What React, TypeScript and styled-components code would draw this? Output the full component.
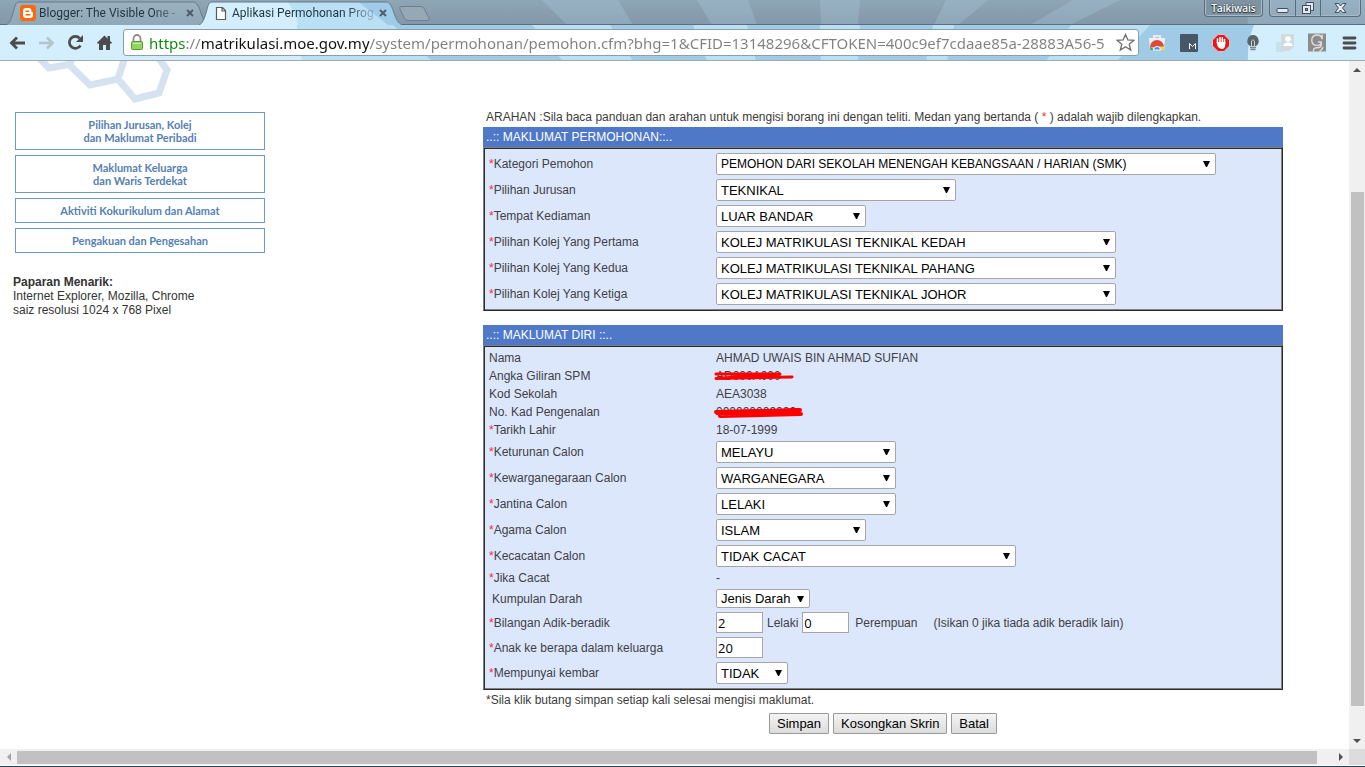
import React from 'react';
import styled, { createGlobalStyle, css } from 'styled-components';

const arial = "'Liberation Sans', Arial, sans-serif";
const chromeFont = "'Open Sans', 'Noto Sans', sans-serif";

const GlobalStyle = createGlobalStyle`
  *, *::before, *::after { box-sizing: border-box; }
  body { margin: 0; background: #fff; font-family: ${arial}; font-size: 12px; color: #333; }
  button, input, select { font-family: inherit; margin: 0; }
`;

/* ---------- browser frame ---------- */

const Window = styled.div`
  min-height: 100vh;
  display: flex;
  flex-direction: column;
  border-bottom: 1px solid #24415e;
`;

const TabStrip = styled.div`
  position: relative;
  height: 25px;
  display: flex;
  align-items: flex-end;
  padding-left: 6px;
  overflow: hidden;
  background: linear-gradient(#8fa6b7, #8297a8);
`;

const Backdrop = styled.svg`
  position: absolute;
  left: 0;
  top: 0;
`;

const StripEdge = styled.div`
  position: absolute;
  left: 0;
  right: 0;
  bottom: 0;
  height: 1px;
  background: #5b6f7e;
`;

const Tab = styled.div<{ $active?: boolean }>`
  position: relative;
  z-index: ${p => (p.$active ? 2 : 1)};
  width: 203px;
  height: 24px;
  display: flex;
  align-items: center;
  gap: 3px;
  padding: 0 13px 0 14px;
  & + & { margin-left: -10px; }
`;

const TabShape = styled.svg`
  position: absolute;
  left: 0;
  top: 0;
`;

const TabIcon = styled.svg`
  position: relative;
  flex: none;
`;

const TabTitle = styled.a`
  position: relative;
  flex: 1;
  min-width: 0;
  white-space: nowrap;
  font: 12px/20px Roboto, ${chromeFont};
  color: #1f3542;
  text-decoration: none;
  mask-image: linear-gradient(to right, #000 80%, rgba(0, 0, 0, 0.2));
`;

const PlainButton = styled.button`
  position: relative;
  flex: none;
  display: flex;
  align-items: center;
  justify-content: center;
  padding: 0;
  border: 0;
  background: none;
`;

const TabClose = styled(PlainButton)`
  width: 12px;
  height: 12px;
`;

const NewTab = styled(PlainButton)`
  z-index: 1;
  width: 34px;
  height: 17px;
  margin: 0 0 3px -5px;
`;

const WindowControls = styled.div`
  position: relative;
  align-self: flex-start;
  margin: 0 4px 0 auto;
  display: flex;
  gap: 6px;
`;

const frame = css`
  border: 1px solid #5a6d7b;
  border-top: 0;
  border-radius: 0 0 4px 4px;
  box-shadow: inset 1px 0 #a9bac6, inset -1px -1px #a9bac6;
`;

const ProfileButton = styled.button`
  height: 17px;
  width: 59px;
  padding: 0;
  ${frame}
  background: #7f93a2;
  font: 600 10px/16px ${chromeFont};
  color: #fff;
  text-shadow: 0 0 2px #1d2a33, 0 1px 1px #1d2a33;
`;

const ControlGroup = styled.div`
  display: flex;
  height: 17px;
  ${frame}
`;

const ControlButton = styled(PlainButton)<{ $wide?: boolean }>`
  width: ${p => (p.$wide ? 40 : 25)}px;
  height: 16px;
  & + & { border-left: 1px solid #5a6d7b; }
`;

const Toolbar = styled.div`
  position: relative;
  height: 36px;
  display: flex;
  align-items: center;
  padding: 0 7px 0 9px;
  overflow: hidden;
  background: #9fcbe7;
  border-bottom: 1px solid #a5a8aa;
`;

const NavButtons = styled.div`
  position: relative;
  display: flex;
  gap: 12px;
  margin-right: 10px;
`;

const Extensions = styled(NavButtons)`
  gap: 14px;
  margin: 0 0 0 9px;
`;

const IconButton = styled(PlainButton)`
  width: 17px;
  height: 20px;
`;

const ExtensionButton = styled(IconButton)`
  width: 18px;
`;

const AddressBar = styled.div`
  position: relative;
  flex: 1;
  min-width: 0;
  height: 27px;
  display: flex;
  align-items: center;
  padding: 0 3px 0 6px;
  background: #fff;
  border: 1px solid #8b9fab;
  border-radius: 3px;
`;

/* The protocol and host take their own colours inside one text field. */
const AddressInput = styled.input`
  flex: 1;
  min-width: 0;
  height: 24px;
  margin-left: 5px;
  padding: 0;
  border: 0;
  outline: 0;
  font: 15px/24px 'Noto Sans', 'Open Sans', sans-serif;
  color: #808080;
  background: linear-gradient(to right, #0a8a0a 37px, #808080 37px 52px, #111 52px 220px, #808080 220px);
  background-clip: text;
  -webkit-background-clip: text;
  -webkit-text-fill-color: transparent;
`;

/* ---------- scrolling viewport ---------- */

const Viewport = styled.div`
  flex: 1;
  display: grid;
  grid-template-columns: minmax(0, 1fr) 16px;
  grid-template-rows: 1fr 16px;
  padding-bottom: 1px;
  background: #fff;
`;

const VerticalBar = styled.div`
  display: flex;
  flex-direction: column;
  background: #f0f0f0;
`;

const HorizontalBar = styled.div`
  display: flex;
  background: #f0f0f0;
`;

const ScrollArrow = styled(PlainButton)`
  width: 17px;
  height: 17px;
  ${VerticalBar} & { width: 16px; }
  ${HorizontalBar} & { height: 16px; }
`;

const Thumb = styled.div<{ $share: number }>`
  flex: ${p => p.$share} 0 0;
  background: #c1c1c1;
  ${VerticalBar} & { margin: 0 1px 0 2px; }
  ${HorizontalBar} & { margin: 2px 0 1px; }
`;

const Track = styled.div<{ $share: number }>`
  flex: ${p => p.$share} 0 0;
`;

const Corner = styled.div`
  background: #dcdcdc;
`;

/* ---------- page ---------- */

const Page = styled.div`
  display: flex;
  padding-right: 66px;
`;

const Sidebar = styled.aside`
  flex: none;
  width: 483px;
  padding-left: 13px;
`;

const Logo = styled.svg`
  display: block;
  margin: 0 0 9px 23px;
`;

const Menu = styled.nav`
  width: 252px;
  padding-left: 2px;
  display: flex;
  flex-direction: column;
  gap: 5px;
`;

const MenuLink = styled.a`
  padding: 5px 0;
  border: 1px solid #6c9bcb;
  font: 700 11px/13px Lato, 'Century Gothic', sans-serif;
  text-align: center;
  color: #5580b4;
  text-decoration: none;
`;

const Notice = styled.p`
  margin: 22px 0 0;
  line-height: 14px;
`;

const Form = styled.form`
  flex: 1;
  max-width: 800px;
  min-width: 0;
  padding: 46px 0 14px;
`;

const Hint = styled.p`
  margin: 0;
  padding-left: 3px;
  line-height: 20px;
  white-space: nowrap;
  color: #3b3b3b;
`;

const Mark = styled.span<{ $strong?: boolean }>`
  color: ${p => (p.$strong ? '#e0421c' : '#f0284a')};
`;

const Section = styled.section`
  & + & { margin-top: 14px; }
`;

const SectionTitle = styled.h2`
  margin: 0;
  padding-left: 3px;
  background: #4f79c8;
  color: #fff;
  font: 12px/20px ${arial};
`;

const Panel = styled.div`
  padding: 3px;
  border: 1px solid;
  border-color: #808080 #2c2c2c #2c2c2c #808080;
  box-shadow: inset 1px 1px #2c2c2c, inset -1px -1px #808080;
  background: #dce7fb;
`;

const Row = styled.div<{ $height: number }>`
  display: grid;
  grid-template-columns: 227px minmax(0, 1fr);
  align-items: center;
  height: ${p => p.$height}px;
  padding-left: 2px;
  color: #3f4048;
`;

const Label = styled.label<{ $indent?: boolean }>`
  padding-left: ${p => (p.$indent ? 3 : 0)}px;
`;

const Cell = styled.div`
  display: flex;
  align-items: center;
`;

const SelectFrame = styled.span<{ $width: number }>`
  position: relative;
  width: ${p => p.$width}px;
`;

const SelectBox = styled.select<{ $small?: boolean; $short?: boolean }>`
  appearance: none;
  display: block;
  width: 100%;
  height: ${p => (p.$short ? 19 : 22)}px;
  padding: 0 0 0 4px;
  border: 1px solid #a6a6a6;
  border-radius: 2px;
  background: #fff;
  color: #000;
  font-size: ${p => (p.$small ? 12 : 13)}px;
`;

const SelectArrow = styled.svg`
  position: absolute;
  right: 6px;
  top: calc(50% - 3px);
  pointer-events: none;
`;

const NumberBox = styled.input`
  width: 47px;
  height: 21px;
  padding: 0 1px;
  border: 1px solid #a6a6a6;
  background: #fff;
  color: #000;
  font: 13px ${chromeFont};
`;

const Unit = styled.label<{ $gap?: boolean }>`
  margin: 0 ${p => (p.$gap ? 16 : 4)}px 0 ${p => (p.$gap ? 6 : 4)}px;
`;

const Redacted = styled.span`
  position: relative;
`;

const Scribble = styled.svg`
  position: absolute;
  left: -2px;
  top: 0;
`;

const Actions = styled.div`
  display: flex;
  justify-content: center;
  gap: 4px;
  margin-top: 3px;
`;

const ActionButton = styled.button`
  height: 21px;
  padding: 0 7px;
  border: 1px solid #9a9a9a;
  border-radius: 1px;
  background: linear-gradient(#f4f4f4, #dcdcdc);
  color: #000;
  font-size: 13px;
`;

/* ---------- drawings ---------- */

const TabBackground = ({ active }: { active?: boolean }) => (
  <TabShape width="203" height="24" viewBox="0 0 203 24" aria-hidden="true">
    <defs>
      <linearGradient id="idleTab" x1="0" y1="0" x2="0" y2="1">
        <stop offset="0" stopColor="#9cb2c1" />
        <stop offset="1" stopColor="#8fa7b7" />
      </linearGradient>
      <clipPath id="tabClip">
        <path d="M0 24C4 22 5 18 7 12S9 1 13 1H187C191 1 193 6 195 12S199 22 203 24Z" />
      </clipPath>
    </defs>
    {active ? (
      <g clipPath="url(#tabClip)">
        <path d="M0 0H203V24H0Z" fill="#d3eefc" />
        <path d="M88 0H203V24H99Q97 12 88 0Z" fill="#bae0f5" />
        <path d="M158 0H203V24H189Z" fill="#9fcbe7" />
      </g>
    ) : (
      <path d="M0 24C4 22 5 18 7 12S9 1 13 1H187C191 1 193 6 195 12S199 22 203 24Z" fill="url(#idleTab)" />
    )}
    <path
      d="M0 24C4 22 5 18 7 12S9 1 13 1H187C191 1 193 6 195 12S199 22 203 24"
      fill="none"
      stroke={active ? '#64798a' : '#667a89'}
    />
  </TabShape>
);

const Cross = () => (
  <svg width="8" height="8" viewBox="0 0 8 8" aria-hidden="true">
    <path d="M1 1L7 7M7 1L1 7" stroke="#4a5b67" strokeWidth="1.8" />
  </svg>
);

const Arrow = ({ points, tone = '#505050' }: { points: string; tone?: string }) => (
  <svg width="8" height="8" viewBox="0 0 8 8" aria-hidden="true">
    <polygon points={points} fill={tone} />
  </svg>
);

/* ---------- form parts ---------- */

type SelectProps = { id: string; width: number; value: string; small?: boolean; short?: boolean };

const Select = ({ id, width, value, small, short }: SelectProps) => (
  <SelectFrame $width={width}>
    <SelectBox id={id} $small={small} $short={short} defaultValue={value}>
      <option>{value}</option>
    </SelectBox>
    <SelectArrow width="7" height="6" viewBox="0 0 7 6" aria-hidden="true">
      <path d="M0 0H7L4 6H3Z" fill="#000" />
    </SelectArrow>
  </SelectFrame>
);

type FieldProps = {
  label: string;
  height?: number;
  required?: boolean;
  indent?: boolean;
  htmlFor?: string;
  children: React.ReactNode;
};

const Field = ({ label, height = 26, required, indent, htmlFor, children }: FieldProps) => (
  <Row $height={height}>
    <Label as={htmlFor ? 'label' : 'span'} htmlFor={htmlFor} $indent={indent}>
      {required && <Mark>*</Mark>}
      {label}
    </Label>
    <Cell>{children}</Cell>
  </Row>
);

const applicationFields: (SelectProps & { label: string })[] = [
  { id: 'kategori', label: 'Kategori Pemohon', width: 500, small: true, value: 'PEMOHON DARI SEKOLAH MENENGAH KEBANGSAAN / HARIAN (SMK)' },
  { id: 'jurusan', label: 'Pilihan Jurusan', width: 240, value: 'TEKNIKAL' },
  { id: 'kediaman', label: 'Tempat Kediaman', width: 150, value: 'LUAR BANDAR' },
  { id: 'kolej1', label: 'Pilihan Kolej Yang Pertama', width: 400, value: 'KOLEJ MATRIKULASI TEKNIKAL KEDAH' },
  { id: 'kolej2', label: 'Pilihan Kolej Yang Kedua', width: 400, value: 'KOLEJ MATRIKULASI TEKNIKAL PAHANG' },
  { id: 'kolej3', label: 'Pilihan Kolej Yang Ketiga', width: 400, value: 'KOLEJ MATRIKULASI TEKNIKAL JOHOR' },
];

const personalFields: (SelectProps & { label: string })[] = [
  { id: 'keturunan', label: 'Keturunan Calon', width: 180, value: 'MELAYU' },
  { id: 'warganegara', label: 'Kewarganegaraan Calon', width: 180, value: 'WARGANEGARA' },
  { id: 'jantina', label: 'Jantina Calon', width: 180, value: 'LELAKI' },
  { id: 'agama', label: 'Agama Calon', width: 150, value: 'ISLAM' },
  { id: 'kecacatan', label: 'Kecacatan Calon', width: 300, value: 'TIDAK CACAT' },
];

const SelectField = ({ label, ...select }: SelectProps & { label: string }) => (
  <Field label={label} required htmlFor={select.id}>
    <Select {...select} />
  </Field>
);

export default function App() {
  return (
    <Window>
      <GlobalStyle />
      <TabStrip>
        <Backdrop width="1365" height="25" aria-hidden="true">
          <g fill="#a9c8dc" opacity="0.32">
            <path d="M542 0H618L633 25H567Z" />
            <path d="M697 0H748L757 25H712Z" />
            <path d="M820 0H860L858 25H821Z" />
            <path d="M946 0H988L958 25H934Z" />
            <path d="M1073 0H1120L1070 25H1030Z" />
            <path d="M1246 0H1365V25H1248Z" />
          </g>
        </Backdrop>
        <StripEdge />
        <Tab>
          <TabBackground />
          <TabIcon width="16" height="16" viewBox="0 0 16 16" aria-hidden="true">
            <rect width="16" height="16" rx="3" fill="#fb6a0a" />
            <path d="M6 3H8.500A3 3 0 0 1 11.500 6Q11.500 7 12.300 7Q13 7 13 8V10A3 3 0 0 1 10 13H6A3 3 0 0 1 3 10V6A3 3 0 0 1 6 3Z" fill="#fff" />
            <path d="M6 6.200H8.500M6 9.800H10" stroke="#fb6a0a" strokeWidth="1.400" strokeLinecap="round" />
          </TabIcon>
          <TabTitle href="#blogger">Blogger: The Visible One -</TabTitle>
          <TabClose aria-label="Tutup tab"><Cross /></TabClose>
        </Tab>
        <Tab $active>
          <TabBackground active />
          <TabIcon width="16" height="16" viewBox="0 0 16 16" aria-hidden="true">
            <path d="M3.500 2.500H9.500L12.500 5.500V14.500H3.500ZM9 2.500V6H12.500" fill="#fff" stroke="#5c5c5c" strokeWidth="1.200" />
          </TabIcon>
          <TabTitle href="#permohonan">Aplikasi Permohonan Prog</TabTitle>
          <TabClose aria-label="Tutup tab"><Cross /></TabClose>
        </Tab>
        <NewTab aria-label="Tab baharu">
          <svg width="34" height="17" viewBox="0 0 34 17" aria-hidden="true">
            <path d="M4 1.500H24Q26 1.500 27 3.500L32 13Q33 15.500 31 15.500H11Q8.500 15.500 7.500 13.500L3 4Q2 1.500 4 1.500Z" fill="#94a8b6" stroke="#6d808e" />
          </svg>
        </NewTab>
        <WindowControls>
          <ProfileButton>Taikiwais</ProfileButton>
          <ControlGroup>
            <ControlButton aria-label="Kecilkan">
              <svg width="13" height="16" viewBox="0 0 13 16" aria-hidden="true">
                <rect x="1" y="8.500" width="11" height="4" rx="1" fill="#e4eaee" stroke="#3f4f5b" />
              </svg>
            </ControlButton>
            <ControlButton aria-label="Pulihkan">
              <svg width="14" height="16" viewBox="0 0 14 16" aria-hidden="true">
                <path d="M5 2.500H12.500V10.500H9.500V5.500H5Z" fill="#e4eaee" stroke="#3f4f5b" />
                <rect x="1.500" y="5.500" width="8" height="8" fill="#e4eaee" stroke="#3f4f5b" />
                <rect x="4.500" y="8.500" width="2" height="2" fill="#8598a6" stroke="#3f4f5b" />
              </svg>
            </ControlButton>
            <ControlButton $wide aria-label="Tutup">
              <svg width="13" height="16" viewBox="0 0 13 16" aria-hidden="true">
                <path d="M1 3.500H4.500L6.500 6L8.500 3.500H12L8.600 8L12 12.500H8.500L6.500 10L4.500 12.500H1L4.400 8Z" fill="#e4eaee" stroke="#3f4f5b" />
              </svg>
            </ControlButton>
          </ControlGroup>
        </WindowControls>
      </TabStrip>

      <Toolbar>
        <Backdrop width="1365" height="36" aria-hidden="true">
          <path d="M298 0H393L432 36H302Z" fill="#b9e0f5" />
          <path d="M0 0H297Q301 16 302 36H0Z" fill="#d3eefc" />
          <g fill="#b9e0f5">
            <path d="M532 0H610L633 36H563Z" />
            <path d="M693 0H747L756 36H707Z" />
            <path d="M820 0H860L858 36H821Z" />
            <path d="M933 0H954L947 36H926Z" />
            <path d="M1071 0H1150L1117 36H1046Z" />
          </g>
          <path d="M1254 0H1365V36H1248Q1247 16 1254 0Z" fill="#d3eefc" />
        </Backdrop>
        <NavButtons>
          <IconButton aria-label="Kembali">
            <svg width="17" height="16" viewBox="0 0 17 16" aria-hidden="true">
              <path d="M16 8H3M8 2.500L2.500 8L8 13.500" fill="none" stroke="#4c4c4c" strokeWidth="2.800" />
            </svg>
          </IconButton>
          <IconButton aria-label="Maju">
            <svg width="17" height="16" viewBox="0 0 17 16" aria-hidden="true">
              <path d="M1 8H14M9 2.500L14.500 8L9 13.500" fill="none" stroke="#b4c3cc" strokeWidth="2.600" />
            </svg>
          </IconButton>
          <IconButton aria-label="Muat semula">
            <svg width="17" height="17" viewBox="0 0 17 17" aria-hidden="true">
              <path d="M13.500 11.500A6 6 0 1 1 12.800 4.300" fill="none" stroke="#4c4c4c" strokeWidth="2.700" />
              <path d="M16 1V8H9Z" fill="#4c4c4c" />
            </svg>
          </IconButton>
          <IconButton aria-label="Laman utama">
            <svg width="17" height="17" viewBox="0 0 17 17" aria-hidden="true">
              <path d="M8.500 1.500L11.500 4.400V2H14V6.800L16 8.800L15 10L14 9.200V16H10V11H7V16H3V9.200L2 10L1 8.800Z" fill="#4c4c4c" />
            </svg>
          </IconButton>
        </NavButtons>
        <AddressBar>
          <svg width="14" height="17" viewBox="0 0 14 17" aria-hidden="true">
            <path d="M3.500 8V4.500A3.500 3.500 0 0 1 10.500 4.500V8" fill="none" stroke="#8e8e8e" strokeWidth="1.800" />
            <rect x="1.500" y="7.500" width="11" height="8" rx="1" fill="#8fd45f" stroke="#57963a" />
            <path d="M3 9.500H11" stroke="#c5efa8" />
          </svg>
          <AddressInput
            aria-label="Alamat"
            defaultValue="https://matrikulasi.moe.gov.my/system/permohonan/pemohon.cfm?bhg=1&CFID=13148296&CFTOKEN=400c9ef7cdaae85a-28883A56-5"
          />
          <PlainButton aria-label="Tanda buku">
            <svg width="19" height="19" viewBox="0 0 19 19" aria-hidden="true">
              <path d="M9.500 1.500L11.900 7L17.700 7.400L13.200 11.200L14.700 17L9.500 13.800L4.300 17L5.800 11.200L1.300 7.400L7.100 7Z" fill="#fff" stroke="#6f6f6f" strokeWidth="1.300" />
            </svg>
          </PlainButton>
        </AddressBar>
        <Extensions>
          <ExtensionButton aria-label="Kedai web">
            <svg width="18" height="18" viewBox="0 0 18 18" aria-hidden="true">
              <path d="M6 4V2H12V4" fill="none" stroke="#e9edf0" strokeWidth="2" />
              <path d="M1 4H17L16 16H2Z" fill="#eef1f3" />
              <path d="M2 13A7 7 0 0 1 16 13L9 14Z" fill="#dd4b39" />
              <path d="M2 12.500L7 16H2.300Z" fill="#3fa653" />
              <path d="M16 12.500V16H10L11 12.500Z" fill="#fbd249" />
              <path d="M5.500 16A3.500 3.500 0 0 1 12.500 16Z" fill="#4a86e8" stroke="#fff" />
            </svg>
          </ExtensionButton>
          <ExtensionButton aria-label="Sambungan M">
            <svg width="18" height="18" viewBox="0 0 18 18" aria-hidden="true">
              <rect width="18" height="18" rx="1" fill="#465867" />
              <path d="M9.500 15V9.500L12.500 12.500L15.500 9.500V15" fill="none" stroke="#fff" />
            </svg>
          </ExtensionButton>
          <ExtensionButton aria-label="Penyekat iklan">
            <svg width="18" height="18" viewBox="0 0 18 18" aria-hidden="true">
              <path d="M6 0.500H12L17.500 6V12L12 17.500H6L0.500 12V6Z" fill="#e01b1f" stroke="#f7b5b5" />
              <path d="M5.500 9V5M8 8V3.500M10.300 8V3.800M12.500 9V5.500" stroke="#fff" strokeWidth="1.600" strokeLinecap="round" />
              <path d="M4.700 8H13.300V11Q13 15 9.500 15Q7 15 5.500 12Z" fill="#fff" />
            </svg>
          </ExtensionButton>
          <ExtensionButton aria-label="Lampu">
            <svg width="18" height="18" viewBox="0 0 18 18" aria-hidden="true">
              <path d="M9 1A6 6 0 0 0 6 12H12A6 6 0 0 0 9 1Z" fill="#5d6468" />
              <path d="M7.500 12V7Q9 4.500 10.500 7V12" fill="none" stroke="#c5cdd1" />
              <path d="M6 13.500H12M6.500 15.500H11.500" stroke="#7d868b" strokeWidth="1.500" />
            </svg>
          </ExtensionButton>
          <ExtensionButton aria-label="Kenalan">
            <svg width="18" height="18" viewBox="0 0 18 18" aria-hidden="true">
              <path d="M0 8H8V18H0Z" fill="#c9e1ed" />
              <path d="M5 0H18V13L13 17H5Z" fill="#d3dadd" />
              <circle cx="12" cy="5" r="2.800" fill="#fff" />
              <path d="M7 12Q8 8.500 12 8.500T17 12Z" fill="#fff" />
            </svg>
          </ExtensionButton>
          <ExtensionButton aria-label="Sambungan G">
            <svg width="19" height="19" viewBox="0 0 19 19" aria-hidden="true">
              <rect width="19" height="19" fill="#8c8c8c" />
              <path d="M15 6Q14 1.500 10 1.500Q4 1.500 4 7Q4 12.500 10 12.500Q14 12.500 14 9H10.500M15 1V6M14 9V13Q13 15 9 15Q5 15.500 6 19M12 19Q15 17 16 14.500" fill="none" stroke="#dedede" strokeWidth="1.500" />
            </svg>
          </ExtensionButton>
          <ExtensionButton aria-label="Menu">
            <svg width="18" height="16" viewBox="0 0 18 16" aria-hidden="true">
              <path d="M4 3H15M4 8H15M4 13H15" stroke="#4c4c4c" strokeWidth="2.800" strokeLinecap="round" />
            </svg>
          </ExtensionButton>
        </Extensions>
      </Toolbar>

      <Viewport>
        <Page>
          <Sidebar>
            <Logo width="140" height="42" viewBox="0 0 140 42" aria-hidden="true">
              <path
                d="M4 -2L13 7L33 3.500L37 -3M33 3.500L54 24L82 18L99 38L123 32L131 9L122 -4M82 18L89 -4"
                fill="none"
                stroke="#d5e3f1"
                strokeWidth="7"
              />
            </Logo>
            <Menu>
              <MenuLink href="#peribadi">Pilihan Jurusan, Kolej<br />dan Maklumat Peribadi</MenuLink>
              <MenuLink href="#keluarga">Maklumat Keluarga<br />dan Waris Terdekat</MenuLink>
              <MenuLink href="#kokurikulum">Aktiviti Kokurikulum dan Alamat</MenuLink>
              <MenuLink href="#pengesahan">Pengakuan dan Pengesahan</MenuLink>
            </Menu>
            <Notice>
              <b>Paparan Menarik:</b><br />
              Internet Explorer, Mozilla, Chrome<br />
              saiz resolusi 1024 x 768 Pixel
            </Notice>
          </Sidebar>

          <Form>
            <Hint>
              ARAHAN :Sila baca panduan dan arahan untuk mengisi borang ini dengan teliti. Medan yang bertanda ({' '}
              <Mark $strong>*</Mark> ) adalah wajib dilengkapkan.
            </Hint>
            <Section>
              <SectionTitle>..:: MAKLUMAT PERMOHONAN::..</SectionTitle>
              <Panel>
                {applicationFields.map(f => <SelectField key={f.id} {...f} />)}
              </Panel>
            </Section>

            <Section>
              <SectionTitle>..:: MAKLUMAT DIRI ::..</SectionTitle>
              <Panel>
                <Field label="Nama" height={18}>AHMAD UWAIS BIN AHMAD SUFIAN</Field>
                <Field label="Angka Giliran SPM" height={18}>
                  <Redacted>
                    AD000A000
                    <Scribble width="82" height="14" viewBox="0 0 82 14" aria-hidden="true">
                      <path d="M2 5L66 5L2 9.500L78 8" fill="none" stroke="#f00" strokeWidth="3" strokeLinecap="round" strokeLinejoin="round" />
                    </Scribble>
                  </Redacted>
                </Field>
                <Field label="Kod Sekolah" height={18}>AEA3038</Field>
                <Field label="No. Kad Pengenalan" height={18}>
                  <Redacted>
                    000000000000
                    <Scribble width="92" height="14" viewBox="0 0 92 14" aria-hidden="true">
                      <path d="M2 7L86 5L3 8L87 9L6 11" fill="none" stroke="#f00" strokeWidth="4" strokeLinecap="round" strokeLinejoin="round" />
                    </Scribble>
                  </Redacted>
                </Field>
                <Field label="Tarikh Lahir" height={18} required>18-07-1999</Field>
                {personalFields.map(f => <SelectField key={f.id} {...f} />)}
                <Field label="Jika Cacat" height={18} required>-</Field>
                <Field label="Kumpulan Darah" height={23} indent htmlFor="darah">
                  <Select id="darah" width={94} short value="Jenis Darah" />
                </Field>
                <Field label="Bilangan Adik-beradik" height={25} required htmlFor="lelaki">
                  <NumberBox id="lelaki" defaultValue="2" />
                  <Unit htmlFor="lelaki">Lelaki</Unit>
                  <NumberBox id="perempuan" defaultValue="0" />
                  <Unit htmlFor="perempuan" $gap>Perempuan</Unit>
                  <span>(Isikan 0 jika tiada adik beradik lain)</span>
                </Field>
                <Field label="Anak ke berapa dalam keluarga" height={25} required htmlFor="anak">
                  <NumberBox id="anak" defaultValue="20" />
                </Field>
                <Field label="Mempunyai kembar" required htmlFor="kembar">
                  <Select id="kembar" width={72} value="TIDAK" />
                </Field>
              </Panel>
            </Section>
            <Hint>*Sila klik butang simpan setiap kali selesai mengisi maklumat.</Hint>
            <Actions>
              <ActionButton type="button">Simpan</ActionButton>
              <ActionButton type="reset">Kosongkan Skrin</ActionButton>
              <ActionButton type="button">Batal</ActionButton>
            </Actions>
          </Form>
        </Page>

        <VerticalBar>
          <ScrollArrow aria-label="Tatal ke atas"><Arrow points="0,6 4,2 8,6" /></ScrollArrow>
          <Track $share={114} />
          <Thumb $share={514} />
          <Track $share={26} />
          <ScrollArrow aria-label="Tatal ke bawah"><Arrow points="0,2 8,2 4,6" /></ScrollArrow>
        </VerticalBar>
        <HorizontalBar>
          <ScrollArrow aria-label="Tatal ke kiri"><Arrow points="6,0 6,8 2,4" tone="#a3a3a3" /></ScrollArrow>
          <Thumb $share={1300} />
          <Track $share={15} />
          <ScrollArrow aria-label="Tatal ke kanan"><Arrow points="2,0 2,8 6,4" /></ScrollArrow>
        </HorizontalBar>
        <Corner />
      </Viewport>
    </Window>
  );
}
